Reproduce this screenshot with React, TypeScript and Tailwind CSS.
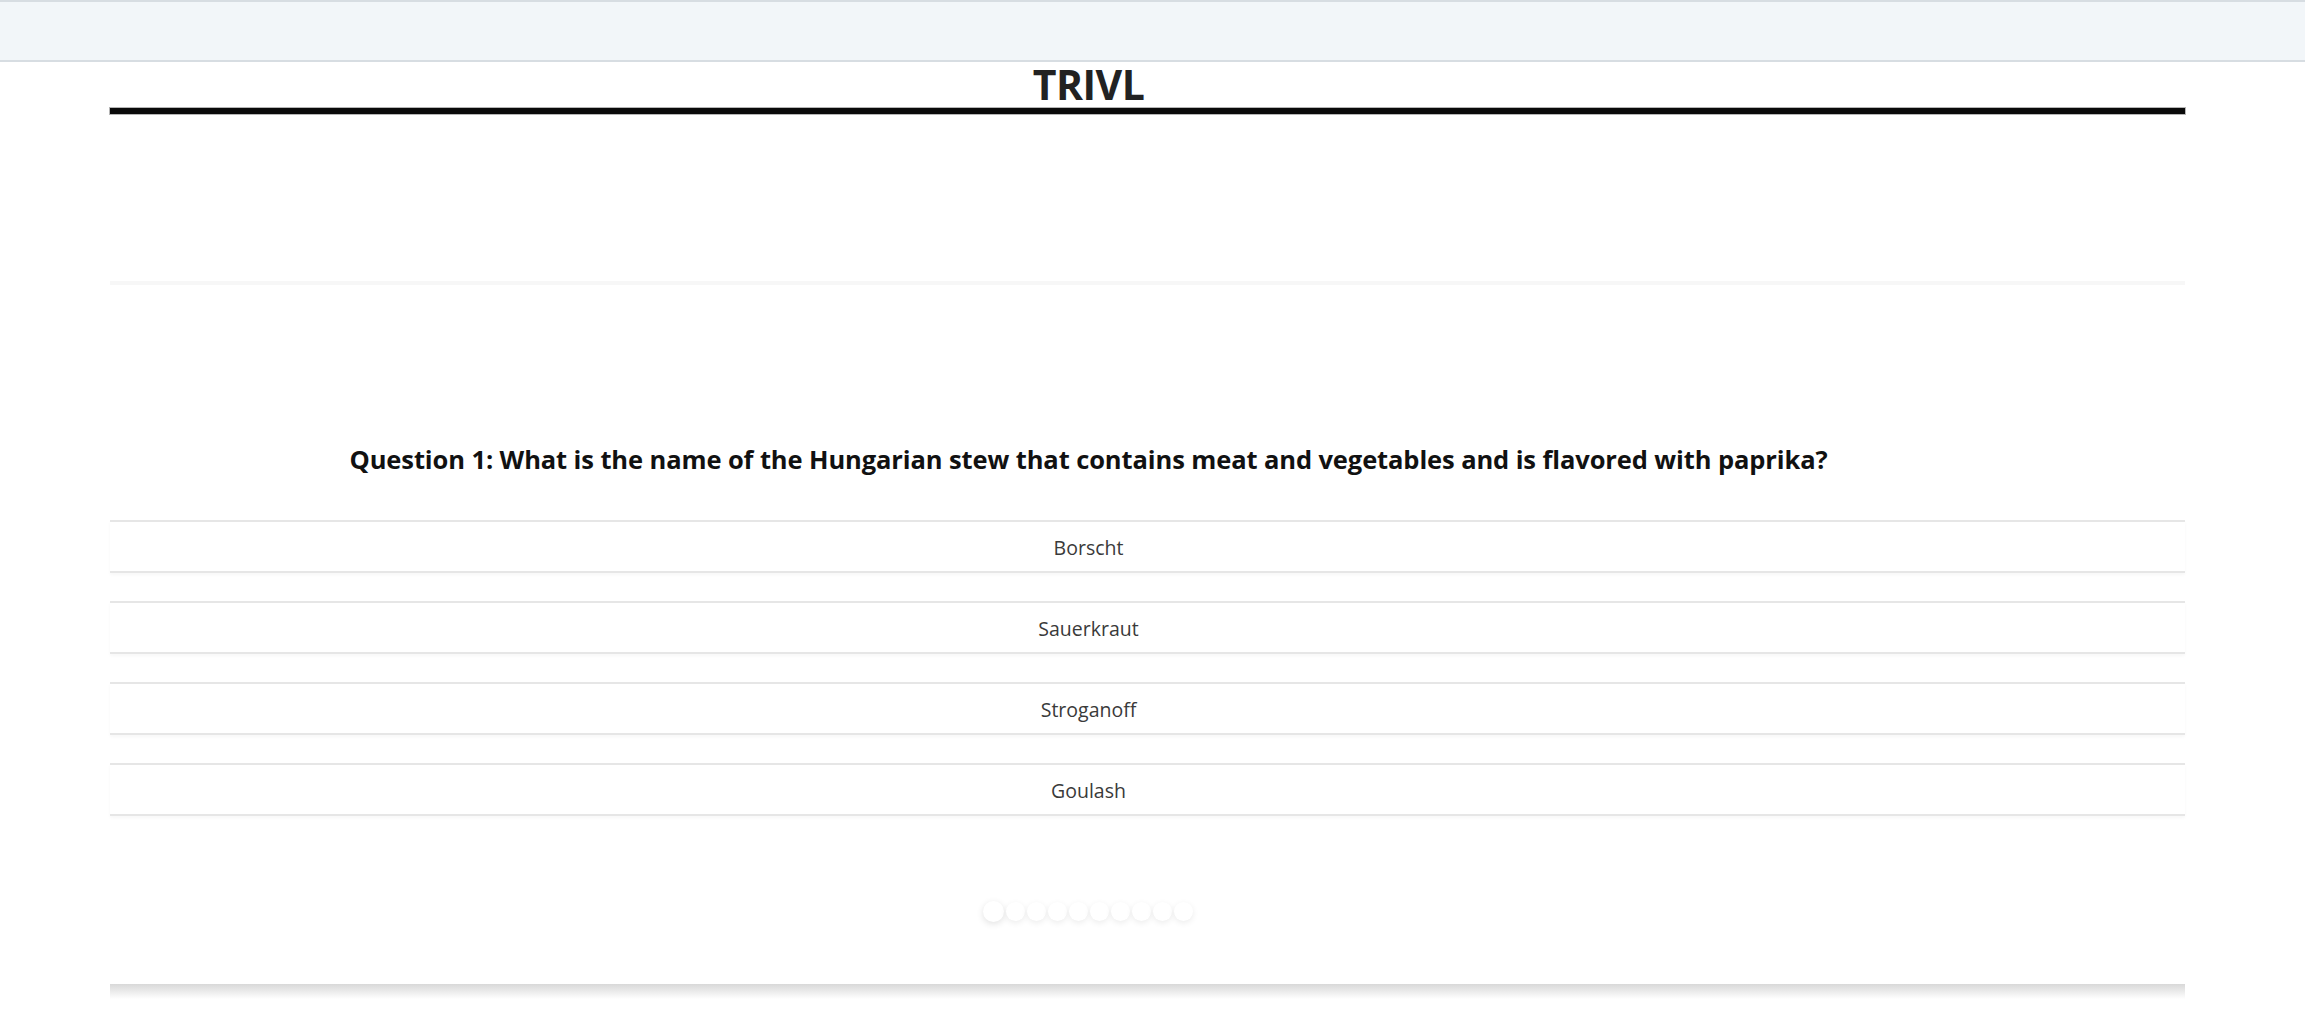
import React from 'react';

const options = ['Borscht', 'Sauerkraut', 'Stroganoff', 'Goulash'];

export default function App() {
  return (
    <div className="min-h-[1027px] bg-white font-['Open_Sans',sans-serif] text-[#222]">
      {/* top bar */}
      <div className="h-[62px] bg-[#f2f6f9] border-t-2 border-b-2 border-[#d7dde2]" />

      <div className="ml-[110px] w-[2075px]">
        <h1 className="pr-[118px] pt-[1px] text-center text-[41px] leading-[42px] font-bold text-[#222] tracking-[-0.5px]">TRIVL</h1>
        <div className="mt-[3px] h-[6px] bg-[#0a0a0a] shadow-[0_0_0_1px_#b5b5b5]" />

        <div className="mt-[167px] border-t-[4px] border-[#f7f7f7]">
          <div className="pt-[157px] pr-[118px] text-center text-[25.5px] leading-[34px] font-bold text-[#111] tracking-[-0.1px]">
            Question 1: What is the name of the Hungarian stew that contains meat and vegetables and is flavored with paprika?
          </div>

          <div className="mt-[44px] flex flex-col gap-[28px]">
            {options.map((o) => (
              <button
                key={o}
                className="h-[53px] w-full border-y-2 border-[#e6e6e6] bg-white pr-[118px] pt-[2px] text-center text-[19.5px] text-[#3a3a3a] shadow-[0_2px_3px_rgba(0,0,0,0.03)]"
              >
                {o}
              </button>
            ))}
          </div>

          <div className="mt-[85px] flex items-center justify-center gap-[2px] pr-[120px]">
            {Array.from({ length: 10 }).map((_, i) => (
              <span
                key={i}
                className={
                  i === 0
                    ? 'h-[21px] w-[21px] rounded-full bg-white shadow-[0_2px_7px_rgba(0,0,0,0.12)]'
                    : 'h-[19px] w-[19px] rounded-full bg-white shadow-[0_2px_6px_rgba(0,0,0,0.08)]'
                }
              />
            ))}
          </div>

          <div className="h-[62px]" />
        </div>
        <div className="h-[15px] bg-gradient-to-b from-[#d8d8d8] to-white" />
      </div>
    </div>
  );
}
